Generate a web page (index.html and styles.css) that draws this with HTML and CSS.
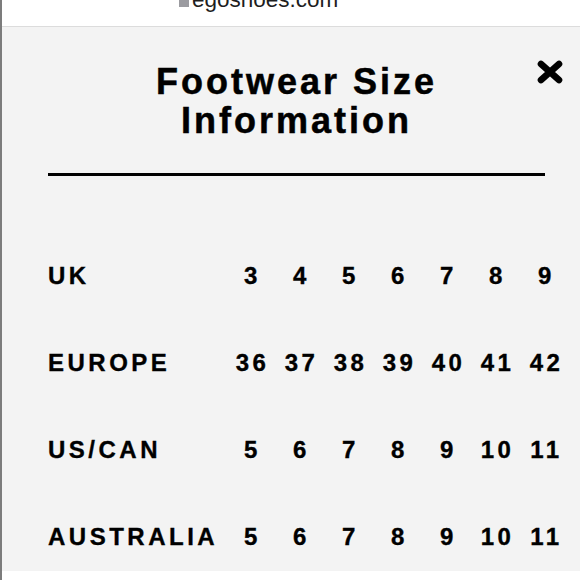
FILE: index.html
```html
<!DOCTYPE html>
<html lang="en">
<head>
<meta charset="utf-8">
<title>Footwear Size Information</title>
<link rel="stylesheet" href="styles.css">
</head>
<body>
<div class="page">
  <header class="topbar">
    <div class="site"><span class="favicon"></span>egoshoes.com</div>
  </header>
  <main class="panel">
    <h1 class="title">Footwear Size<br>Information</h1>
    <button class="close" aria-label="Close">
      <svg width="26" height="24" viewBox="0 0 26 24"><path d="M4 4 L22 20 M22 4 L4 20" stroke="#000" stroke-width="6.6" stroke-linecap="round" fill="none"/></svg>
    </button>
    <hr class="rule">
    <div class="sizes">
      <div class="row"><span class="label">UK</span><span>3</span><span>4</span><span>5</span><span>6</span><span>7</span><span>8</span><span>9</span></div>
      <div class="row"><span class="label">EUROPE</span><span>36</span><span>37</span><span>38</span><span>39</span><span>40</span><span>41</span><span>42</span></div>
      <div class="row"><span class="label">US/CAN</span><span>5</span><span>6</span><span>7</span><span>8</span><span>9</span><span>10</span><span>11</span></div>
      <div class="row"><span class="label">AUSTRALIA</span><span>5</span><span>6</span><span>7</span><span>8</span><span>9</span><span>10</span><span>11</span></div>
    </div>
  </main>
</div>
</body>
</html>
```
FILE: styles.css
```css
* { box-sizing: border-box; }
html, body { margin: 0; padding: 0; background: #fff; }
body { font-family: "Liberation Sans", Arial, Helvetica, sans-serif; color: #000; }

.page {
  width: 580px;
  height: 580px;
  border-left: 2px solid #7c7c7c;
  overflow: hidden;
  background: #fff;
}

.topbar {
  height: 27px;
  border-bottom: 1px solid #dcdcdc;
  background: #fff;
  overflow: hidden;
  padding-left: 177px;
}
.site {
  display: flex;
  align-items: baseline;
  font-size: 22.5px;
  line-height: 26px;
  color: #1e1e1e;
  margin-top: -13px;
}
.favicon {
  display: inline-block;
  width: 10px;
  height: 10px;
  background: #9b9ba0;
  margin-right: 3px;
}

.panel {
  position: relative;
  background: #f3f3f3;
  padding: 35px 35px 22px 46px;
}

.title {
  margin: 0;
  text-align: center;
  font-size: 36px;
  line-height: 39px;
  font-weight: 700;
  letter-spacing: 3px;
  -webkit-text-stroke: 0.5px #000;
}

.close {
  position: absolute;
  top: 33px;
  right: 17px;
  width: 26px;
  height: 24px;
  padding: 0;
  border: 0;
  background: none;
  display: block;
}
.close svg { display: block; }

.rule {
  margin: 33px 0 0 0;
  height: 3px;
  border: 0;
  background: #000;
}

.sizes {
  margin-top: 88px;
  margin-right: -26px;
  display: flex;
  flex-direction: column;
  gap: 63px;
}
.row {
  display: grid;
  grid-template-columns: 180px repeat(7, 49px);
  font-size: 24px;
  line-height: 24px;
  font-weight: 700;
  letter-spacing: 3.5px;
  -webkit-text-stroke: 0.35px #000;
}
.row span { text-align: center; }
.row .label { text-align: left; }
```
